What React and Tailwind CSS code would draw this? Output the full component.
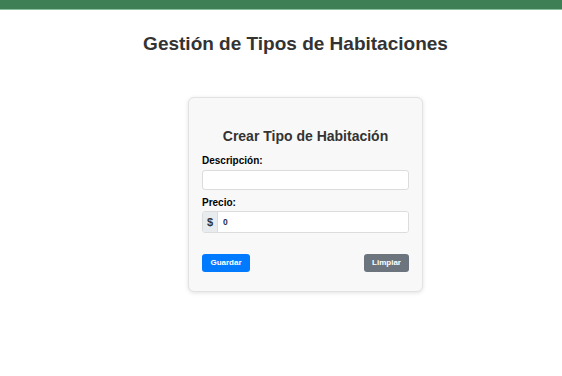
export default function App() {
  return (
    <div className="min-h-[376px] bg-white" style={{ fontFamily: '"Liberation Sans", Arial, sans-serif' }}>
      <div className="h-[10px] bg-[#3f7f55] border-b border-[#8cbf9c]" />
      <h1 className="mt-[20px] pl-[29px] text-center text-[19px] leading-[28px] font-bold text-[#333333]">
        Gestión de Tipos de Habitaciones
      </h1>
      <div className="mt-[39px] flex justify-center pl-[49px]">
        <div className="w-[235px] rounded-[6px] border border-[#e2e2e2] bg-[#f8f8f8] shadow-[0_1px_4px_rgba(0,0,0,0.12)] px-[13px] pt-[29px] pb-[19px]">
          <h2 className="text-center text-[14px] leading-[18px] font-bold text-[#333333]">
            Crear Tipo de Habitación
          </h2>
          <div className="mt-[10px]">
            <label className="block text-[10px] leading-[12px] font-bold text-black">Descripción:</label>
            <input className="mt-[3px] block w-full h-[20px] rounded-[3px] border border-[#dcdcdc] bg-white outline-none" />
          </div>
          <div className="mt-[7px]">
            <label className="block text-[10px] leading-[12px] font-bold text-black">Precio:</label>
            <div className="mt-[2px] flex h-[22px] rounded-[3px] border border-[#dcdcdc] overflow-hidden bg-white">
              <span className="w-[15px] flex items-center justify-center bg-[#e9ecef] border-r border-[#dcdcdc] text-[11px] font-bold text-[#333]">$</span>
              <input defaultValue="0" className="flex-1 min-w-0 px-[5px] text-[8.5px] font-semibold text-[#1f2d4d] outline-none bg-white" />
            </div>
          </div>
          <div className="mt-[21px] flex justify-between">
            <button className="h-[18px] w-[48px] rounded-[3px] bg-[#007bff] text-white text-[8px] font-bold">Guardar</button>
            <button className="h-[18px] w-[45px] rounded-[3px] bg-[#6c757d] text-white text-[8px] font-bold">Limpiar</button>
          </div>
        </div>
      </div>
    </div>
  );
}
